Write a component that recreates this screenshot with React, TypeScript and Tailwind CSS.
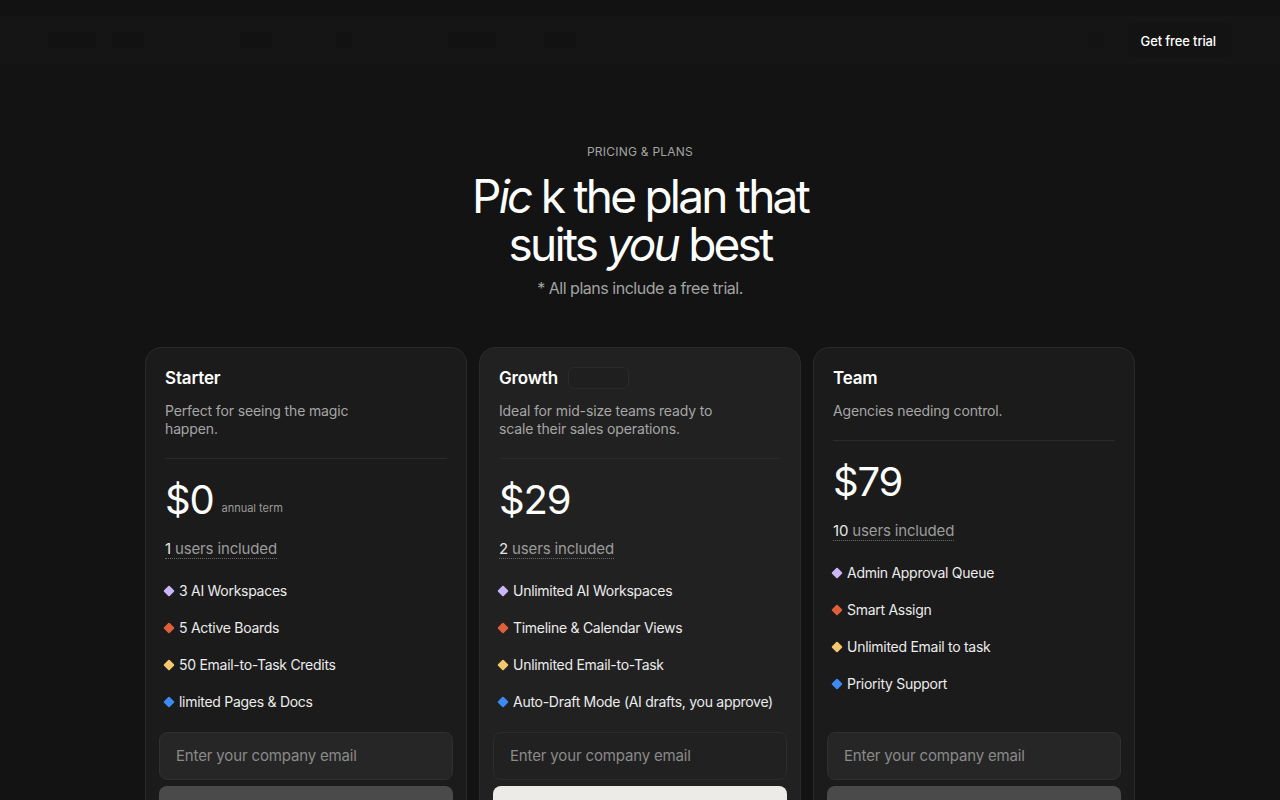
import React from 'react';

type Plan = {
  name: string;
  desc: string;
  price: string;
  term?: string;
  users: string;
  features: string[];
  featured?: boolean;
};

const plans: Plan[] = [
  {
    name: 'Starter',
    desc: 'Perfect for seeing the magic happen.',
    price: '$0',
    term: 'annual term',
    users: '1',
    features: ['3 AI Workspaces', '5 Active Boards', '50 Email-to-Task Credits', 'limited Pages & Docs'],
  },
  {
    name: 'Growth',
    desc: 'Ideal for mid-size teams ready to scale their sales operations.',
    price: '$29',
    users: '2',
    features: [
      'Unlimited AI Workspaces',
      'Timeline & Calendar Views',
      'Unlimited Email-to-Task',
      'Auto-Draft Mode (AI drafts, you approve)',
    ],
    featured: true,
  },
  {
    name: 'Team',
    desc: 'Agencies needing control.',
    price: '$79',
    users: '10',
    features: ['Admin Approval Queue', 'Smart Assign', 'Unlimited Email to task', 'Priority Support'],
  },
];

const dots = ['bg-[#c9b6f7]', 'bg-[#df5f3b]', 'bg-[#f4c66e]', 'bg-[#3d8af0]'];

const PlanCard = ({ plan }: { plan: Plan }) => (
  <div
    className={`flex flex-col rounded-2xl border border-[#2a2a2a] ${
      plan.featured ? 'bg-[#212121]' : 'bg-[#1b1b1b]'
    }`}
  >
    <div className="px-[19px] pt-5">
      <div className="flex h-5 items-center gap-2.5">
        <h3 className="text-[17px] leading-5 font-semibold tracking-[-0.01em] text-white">{plan.name}</h3>
        {plan.featured && <span className="h-[22px] w-[61px] rounded-md border border-[#2a2a2a] bg-[#1f1f1f]" />}
      </div>
      <p className="mt-[14px] max-w-[215px] text-[14px] leading-[18px] tracking-[-0.01em] text-[#a6a6a6]">{plan.desc}</p>
      <div className="mt-5 h-px bg-[#2b2b2b]" />
      <div className="mt-5 flex items-end gap-2">
        <span className="text-[40px] leading-[42px] font-normal tracking-[-0.03em] text-white">{plan.price}</span>
        {plan.term && <span className="mb-[5px] text-[11px] text-[#9a9a9a]">{plan.term}</span>}
      </div>
      <p className="mt-[18px] inline-block text-[15px] leading-5 tracking-[-0.01em]">
        <span className="border-b border-dotted border-[#6a6a6a]">
          <span className="text-[#e6e6e6]">{plan.users} </span>
          <span className="text-[#9c9c9c]">users included</span>
        </span>
      </p>
      <ul className="mt-[21px] flex flex-col gap-[17px]">
        {plan.features.map((f, i) => (
          <li
            key={f}
            className="flex items-center gap-[6px] whitespace-nowrap text-[14px] leading-5 tracking-[-0.02em] text-[#ececec]"
          >
            <span className={`h-2 w-2 shrink-0 rotate-45 rounded-[1px] ${dots[i]}`} aria-hidden />
            <span>{f}</span>
          </li>
        ))}
      </ul>
    </div>
    <div className="mt-auto flex flex-col gap-1.5 px-[13px] pt-5 pb-4">
      <div
        className={`flex h-12 items-center rounded-lg border px-4 text-[15px] tracking-[-0.01em] text-[#8a8a8a] ${
          plan.featured ? 'border-[#2c2c2c] bg-[#212121]' : 'border-[#2f2f2f] bg-[#262626]'
        }`}
      >
        Enter your company email
      </div>
      <div className={`h-12 rounded-lg ${plan.featured ? 'bg-[#ecebe7]' : 'bg-[#4a4a4a]'}`} />
    </div>
  </div>
);

export default function App() {
  return (
    <div
      className="min-h-screen overflow-hidden bg-[#131313] text-white"
      style={{ fontFamily: 'Inter, "Noto Sans", sans-serif' }}
    >
      <header className="bg-[#121212] pt-4">
        <nav className="flex h-12 items-center justify-between bg-[#151515] px-12">
          <div className="flex items-center">
            <span className="h-4 w-12 bg-[#121212]" />
            <span className="ml-4 h-4 w-8 bg-[#121212]" />
            <span className="ml-24 h-4 w-8 bg-[#121212]" />
            <span className="ml-16 h-4 w-4 bg-[#121212]" />
            <span className="ml-24 h-4 w-12 bg-[#121212]" />
            <span className="ml-12 h-4 w-8 bg-[#121212]" />
          </div>
          <div className="flex items-center gap-6">
            <span className="h-4 w-4 bg-[#131313]" />
            <a className="flex h-9 items-center rounded-md bg-[#131313] pr-4 pl-[13px] text-[13px] leading-5 font-medium tracking-[-0.01em] text-white">
              <span className="pt-px">Get free trial</span>
            </a>
          </div>
        </nav>
      </header>

      <section className="flex flex-col items-center pt-[80px] text-center">
        <p className="text-[12px] leading-4 tracking-[0.02em] text-[#a3a3a3]">PRICING &amp; PLANS</p>
        <h1 className="mt-3 text-[46px] leading-[48px] font-normal tracking-[-0.06em] text-white">
          P<i>ic</i> k the plan that
          <br />
          suits <i>you</i> best
        </h1>
        <p className="mt-2 text-[16px] leading-6 tracking-[-0.03em] text-[#a3a3a3]">* All plans include a free trial.</p>
      </section>

      <section className="mx-auto mt-[47px] grid max-w-[990px] grid-cols-3 gap-3">
        {plans.map((p) => (
          <PlanCard key={p.name} plan={p} />
        ))}
      </section>
    </div>
  );
}
